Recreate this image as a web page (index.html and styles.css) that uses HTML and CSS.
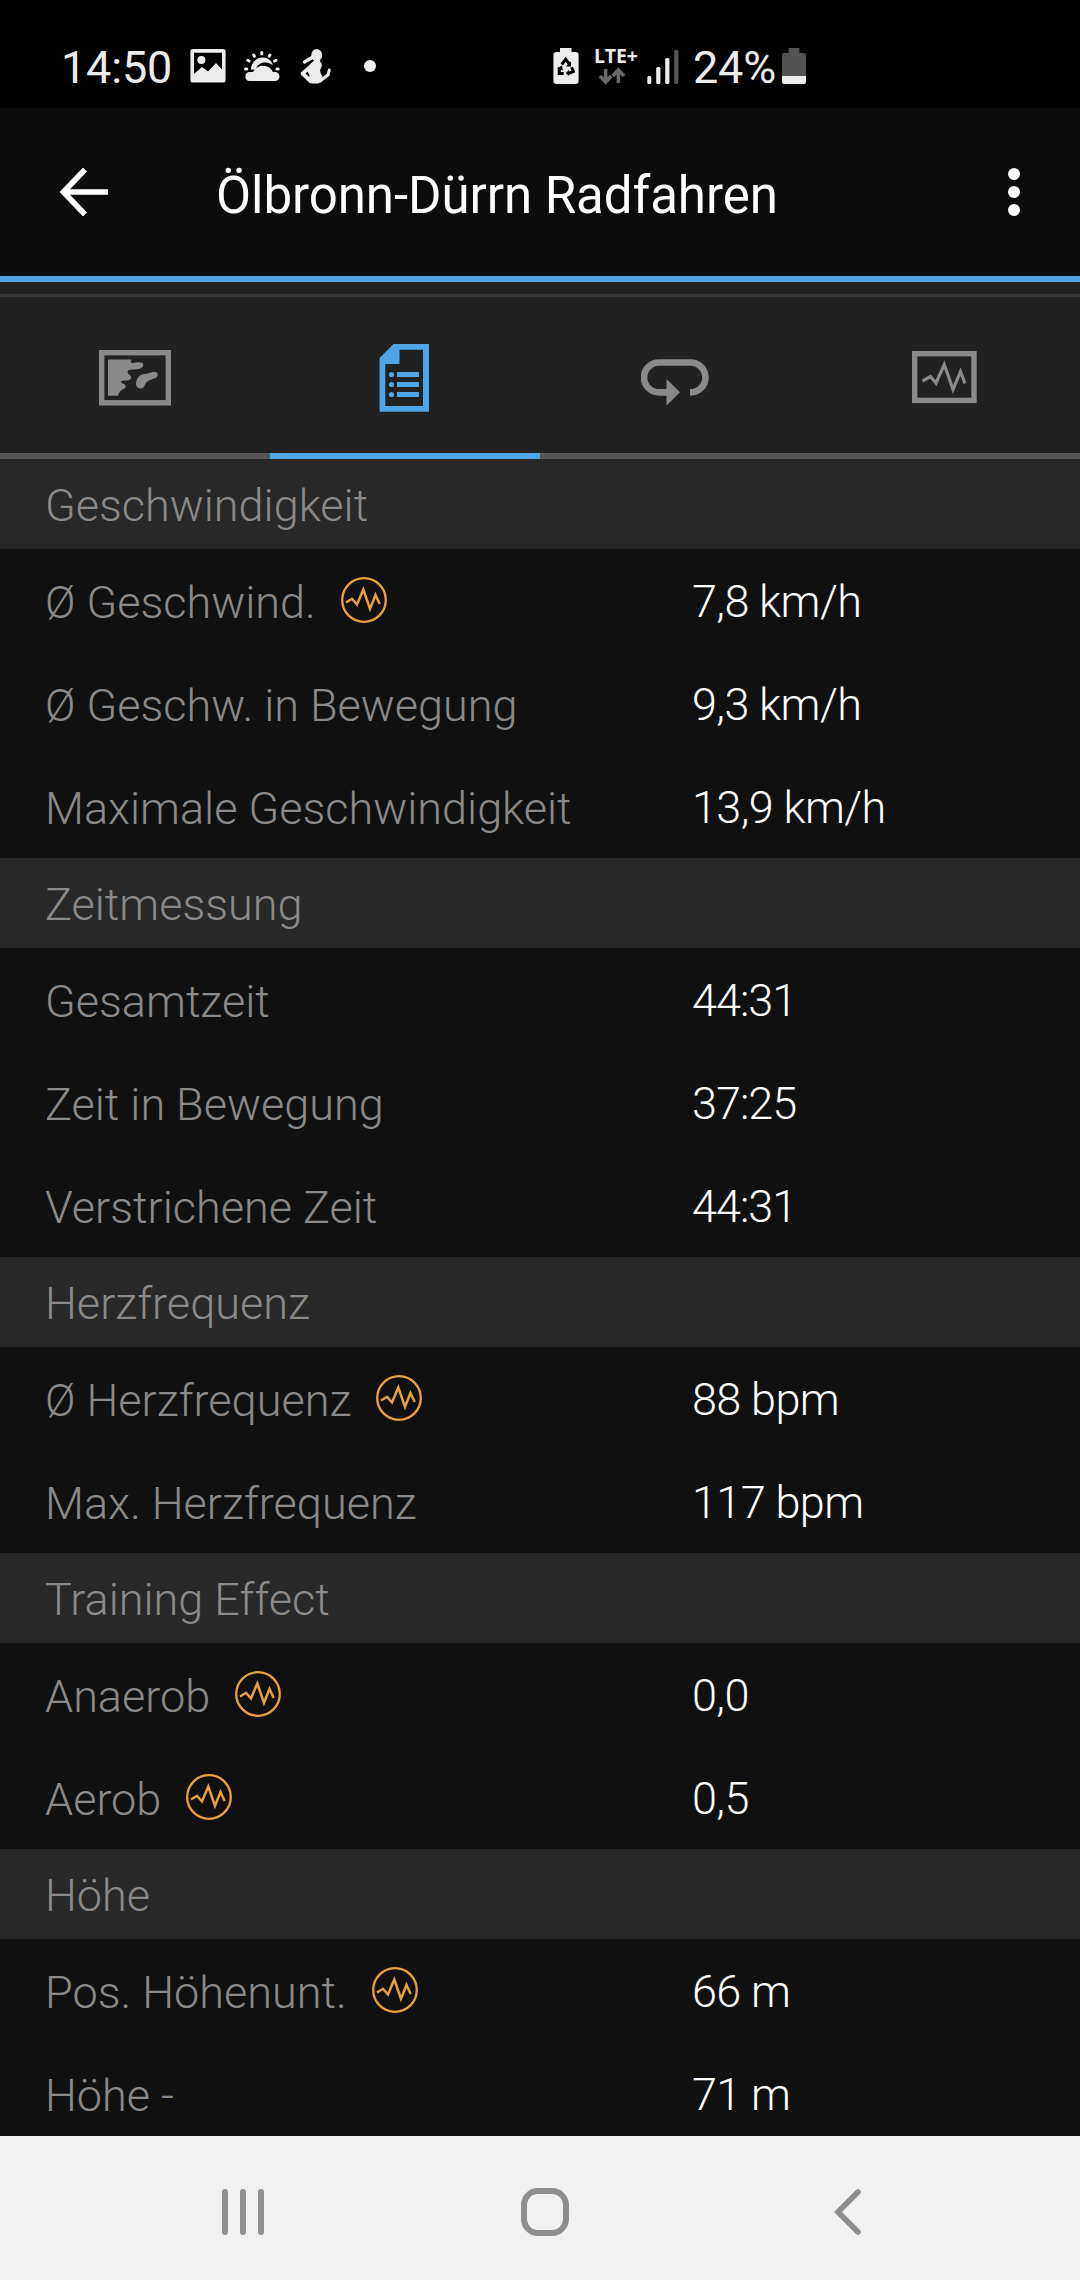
FILE: index.html
```html
<!DOCTYPE html>
<html lang="de">
<head>
<meta charset="utf-8">
<title>Ölbronn-Dürrn Radfahren</title>
<link rel="stylesheet" href="styles.css">
</head>
<body>
<svg class="defs" width="0" height="0" aria-hidden="true">
  <symbol id="trend" viewBox="0 0 46 46">
    <circle cx="23" cy="23" r="21.8" fill="none" stroke="currentColor" stroke-width="2.3"/>
    <path d="M5 25.5 L11 21.8 L16 27.5 L22.3 12.5 L29 32 L34.5 18 L38.7 27" fill="none" stroke="currentColor" stroke-width="2.5" stroke-miterlimit="10"/>
  </symbol>
</svg>
<div class="screen">
  <header class="status">
    <div class="status-left">
      <span class="clock">14:50</span>
      <svg class="i-image" width="36" height="36" viewBox="0 0 36 36"><path fill="currentColor" fill-rule="evenodd" d="M3 1H33Q35.6 1 35.6 3.6V32Q35.6 34.6 33 34.6H3Q.4 34.6 .4 32V3.6Q.4 1 3 1ZM4 4.7V26L12 19L18 23.5L26 15L32 21.5V4.7Z"/><circle cx="11.4" cy="12" r="4" fill="currentColor"/></svg>
      <svg class="i-weather" width="36" height="36" viewBox="0 0 36 36"><g fill="none" stroke="currentColor" stroke-width="3" stroke-linecap="round"><path d="M17.8 4.5V6M9.7 7L10.4 8.3M25.9 7L25.2 8.3M3.7 12.3L5 13M31.9 12.3L30.6 13M1.5 21H2.8M34.2 21H32.9"/></g><path fill="currentColor" d="M6.7 21.5C7.5 14 13 9.6 18.5 9.6C24 9.6 28 13 28.6 17C22 12.6 14 14 11.8 21.8Z"/><path fill="currentColor" d="M5 33A4.6 4.6 0 0 1 5 24H9C11 20.500 15 17.700 19 17.700C24 17.700 27.500 20.500 28.800 24H31A4.500 4.500 0 0 1 31 33Z"/></svg>
      <svg class="i-person" width="32" height="37" viewBox="0 0 32 37"><g fill="currentColor"><ellipse cx="16.700" cy="7.200" rx="5.400" ry="6.200"/><path d="M10.500 16L14.500 12V9H20V13.500Q22.200 15 21.800 18L20 22.500Q20 25 22.500 28.500V33L18 35.500H11L8 33L9.500 27.500L7.500 23Z"/></g><g fill="none" stroke="currentColor" stroke-linecap="round" stroke-linejoin="round"><path stroke-width="3.400" d="M4.500 14L12 9.500"/><path stroke-width="3.800" d="M12.500 17L2.600 25.500L10.500 33"/><path stroke-width="3" d="M20 33L28 27L29.300 22"/></g></svg>
      <span class="dot"></span>
    </div>
    <div class="status-right">
      <svg width="26" height="36" viewBox="0 0 26 36"><path fill="currentColor" d="M7 0H18.500V4H22.500Q25.600 4 25.600 7V33Q25.600 36 22.500 36H3.500Q.4 36 .4 33V7Q.4 4 3.500 4H7Z"/><g fill="none" stroke="#000" stroke-width="3"><path d="M8.800 16.500L12.700 11.200L16.500 16.300M18.600 19.300L20.300 23.500L16 25.400M10.700 25.400H6.200L6.400 19.300"/></g><path fill="#000" d="M18 13.200V18.500H12.900ZM16.200 21.800V28L12.600 25.300ZM4 20.200L9 17.500L9.800 22.500Z"/></svg>
      <div class="network">
        <span class="lte">LTE+</span>
        <svg width="26" height="18" viewBox="0 0 26 18" fill="none" stroke="#696969" stroke-width="3.600"><path d="M6.600 2V15M1 9L6.600 15L12.200 9M19.400 16V3M13.800 9L19.400 3L25 9"/></svg>
      </div>
      <svg class="i-signal" width="32" height="36" viewBox="0 0 32 36"><g fill="currentColor"><rect x=".3" y="28" width="4" height="8" rx="1.500"/><rect x="9.200" y="19" width="4.200" height="17" rx="1.500"/><rect x="18.200" y="10" width="4.200" height="26" rx="1.500"/></g><rect x="27.200" y="2" width="4.200" height="34" rx="1.500" fill="#555"/></svg>
      <span class="percent">24%</span>
      <svg class="i-battery" width="24" height="36" viewBox="0 0 24 36"><path fill="#525252" d="M6.500 0H17.500V5H22Q24 5 24 7V28H0V7Q0 5 2 5H6.500Z"/><path fill="currentColor" d="M0 28H24V34Q24 36 22 36H2Q0 36 0 34Z"/></svg>
    </div>
  </header>

  <div class="appbar">
    <svg class="back" width="48" height="48" viewBox="0 0 48 48"><path d="M48 24H4M25 1.500L3.500 24L25 46.500" fill="none" stroke="#fff" stroke-width="5.600"/></svg>
    <h1>Ölbronn-Dürrn Radfahren</h1>
    <svg class="more" width="12" height="48" viewBox="0 0 12 48" fill="#fff"><circle cx="6" cy="6" r="6"/><circle cx="6" cy="24" r="6"/><circle cx="6" cy="42" r="6"/></svg>
  </div>

  <nav class="tabs">
    <div class="tab"><svg width="72" height="56" viewBox="0 0 72 56"><rect x="2.700" y="2.700" width="66.600" height="50.100" fill="none" stroke="currentColor" stroke-width="5.400"/><path fill="currentColor" d="M9 9.500H32.500Q30.500 13 34 13C38 12.500 41 11.500 43.500 13C46 16 43 18.500 38 19.300C33 20 29 19 28.500 22C29 25 33 25 32 28.500C30 32 23 29.500 22 31.500C22 34 28 33.500 26.500 37.500C23 40 20 41 19 45.700H9Z"/><path fill="currentColor" d="M37 34.500C37 28 41 24 46 24C50 24 53 21.800 56 21.800C60 22.500 59.500 27.200 56 28.200C51 29.500 47 31.500 45.500 35.500C44.500 40 37.500 39.500 37 34.500Z"/></svg></div>
    <div class="tab active"><svg width="50" height="68" viewBox="0 0 50 68"><path fill="currentColor" fill-rule="evenodd" d="M14.500 0H50V67.700H.600V14ZM20.500 5.700V20H6.300V62H44V5.700Z"/><g fill="currentColor"><circle cx="12.500" cy="30.500" r="2.600"/><circle cx="12.500" cy="40.500" r="2.600"/><circle cx="12.500" cy="50.500" r="2.600"/><path d="M18 28H40V33H18ZM18 38H40V43H18ZM18 48H40V53H18Z"/></g></svg></div>
    <div class="tab lap"><svg width="68" height="47" viewBox="0 0 68 47"><path d="M26 33.400H18A14.900 14.900 0 0 1 18 3.500H49.500A14.900 14.900 0 0 1 49.500 33.400H49" fill="none" stroke="currentColor" stroke-width="6.600"/><path d="M25.500 20L39 33.200L25.500 46.500Z" fill="currentColor"/></svg></div>
    <div class="tab chart"><svg width="65" height="53" viewBox="0 0 65 53"><rect x="2.700" y="2.700" width="59.300" height="46.700" fill="none" stroke="currentColor" stroke-width="5.400"/><path d="M10.500 30L18.500 25.500L24 32L32.300 13.500L41 38.500L48.500 20.500L53 32.500" fill="none" stroke="currentColor" stroke-width="3.200" stroke-miterlimit="10"/></svg></div>
  </nav>

  <main class="stats">
    <h2>Geschwindigkeit</h2>
    <div class="row"><span class="label">Ø Geschwind.</span><svg class="trend"><use href="#trend"/></svg><span class="value">7,8 km/h</span></div>
    <div class="row"><span class="label">Ø Geschw. in Bewegung</span><span class="value">9,3 km/h</span></div>
    <div class="row"><span class="label">Maximale Geschwindigkeit</span><span class="value">13,9 km/h</span></div>
    <h2>Zeitmessung</h2>
    <div class="row"><span class="label">Gesamtzeit</span><span class="value time">44:31</span></div>
    <div class="row"><span class="label">Zeit in Bewegung</span><span class="value time">37:25</span></div>
    <div class="row"><span class="label">Verstrichene Zeit</span><span class="value time">44:31</span></div>
    <h2>Herzfrequenz</h2>
    <div class="row"><span class="label">Ø Herzfrequenz</span><svg class="trend"><use href="#trend"/></svg><span class="value">88 bpm</span></div>
    <div class="row"><span class="label">Max. Herzfrequenz</span><span class="value">117 bpm</span></div>
    <h2>Training Effect</h2>
    <div class="row"><span class="label">Anaerob</span><svg class="trend"><use href="#trend"/></svg><span class="value">0,0</span></div>
    <div class="row"><span class="label">Aerob</span><svg class="trend"><use href="#trend"/></svg><span class="value">0,5</span></div>
    <h2>Höhe</h2>
    <div class="row"><span class="label">Pos. Höhenunt.</span><svg class="trend"><use href="#trend"/></svg><span class="value">66 m</span></div>
    <div class="row"><span class="label">Höhe -</span><span class="value">71 m</span></div>
  </main>

  <footer class="navbar">
    <svg width="42" height="46" viewBox="0 0 42 46"><path d="M3 3V43M21 3V43M39 3V43" fill="none" stroke="currentColor" stroke-width="6" stroke-linecap="round"/></svg>
    <svg class="home" width="48" height="48" viewBox="0 0 48 48"><rect x="3" y="3" width="42" height="42" rx="14" fill="none" stroke="currentColor" stroke-width="6"/></svg>
    <svg width="28" height="46" viewBox="0 0 28 46"><path d="M24 3L4 23L24 43" fill="none" stroke="currentColor" stroke-width="5.600" stroke-linecap="round"/></svg>
  </footer>
</div>
</body>
</html>
```
FILE: styles.css
```css
* { box-sizing: border-box; }
body { margin: 0; background: #101010; font-family: Roboto, "Noto Sans", sans-serif; }
svg { display: block; flex: none; }
.defs { position: absolute; }
.screen { display: flex; flex-direction: column; width: 1080px; height: 2280px; overflow: hidden; background: #101010; }

.status { display: flex; flex: none; height: 108px; padding-top: 24px; background: #000; color: #ececec; }
.status-left, .status-right { display: flex; align-items: center; height: 84px; }
.status-left { width: 553px; padding-left: 61px; }
.clock, .percent { padding-top: 3px; font-size: 45px; line-height: 81px; white-space: nowrap; }
.clock { width: 129px; letter-spacing: -.2px; }
.i-weather { margin-left: 18px; }
.i-person { margin-left: 20px; }
.dot { width: 12px; height: 12px; margin-left: 32px; border-radius: 50%; background: currentColor; }
.network { display: flex; flex-direction: column; align-items: flex-start; width: 50px; height: 38px; margin-left: 15px; }
.network svg { margin: 4px 0 0 5px; }
.lte { height: 16px; font: 700 19.5px/18px "Open Sans", sans-serif; letter-spacing: -.2px; }
.i-signal { margin-left: 3px; }
.percent { width: 89px; margin-left: 14px; letter-spacing: -.2px; }

.appbar { display: flex; flex: none; align-items: center; height: 174px; padding: 0 60px; border-bottom: 6px solid #4fa6e6; background: #0c0c0c; }
.appbar h1 { flex: 1; margin: 0 0 0 108px; padding-top: 7px; color: #fff; font-size: 51px; font-weight: 400; line-height: 60px; letter-spacing: -.05px; }

.tabs { display: grid; flex: none; grid-template-columns: repeat(4, 270px); height: 177px; padding-top: 12px; background: #212121; }
.tab { display: flex; align-items: center; justify-content: center; padding-top: 5px; border-top: 3px solid #363636; border-bottom: 6px solid #575757; color: #8a8a8a; }
.tab.active { padding-right: 2px; border-bottom-color: #4fa6e6; color: #4fa6e6; }
.tab.lap { padding-top: 14px; }
.tab.chart { padding-right: 1px; }

.stats { flex: 1; min-height: 0; overflow: hidden; font-size: 45px; font-weight: 300; }
.stats h2 { height: 90px; margin: 0; padding: 2px 45px 0; background: #282828; color: #8a8a8a; font-size: 45px; font-weight: 300; line-height: 90px; }
.row { display: flex; align-items: center; height: 103px; padding: 0 45px; }
.label { padding-top: 3px; color: #8a8a8a; white-space: nowrap; }
.trend { width: 46px; height: 46px; margin: -2px 0 0 25px; color: #e9a040; }
.value { width: 343px; margin-left: auto; padding-top: 1px; color: #fff; letter-spacing: -.6px; }
.value.time { letter-spacing: -1px; }

.navbar { display: flex; flex: none; align-items: center; justify-content: space-between; height: 144px; padding: 8px 218px 0 222px; background: #f1f1f1; color: #8e8e8e; }
.home { margin-right: 9px; }
```
